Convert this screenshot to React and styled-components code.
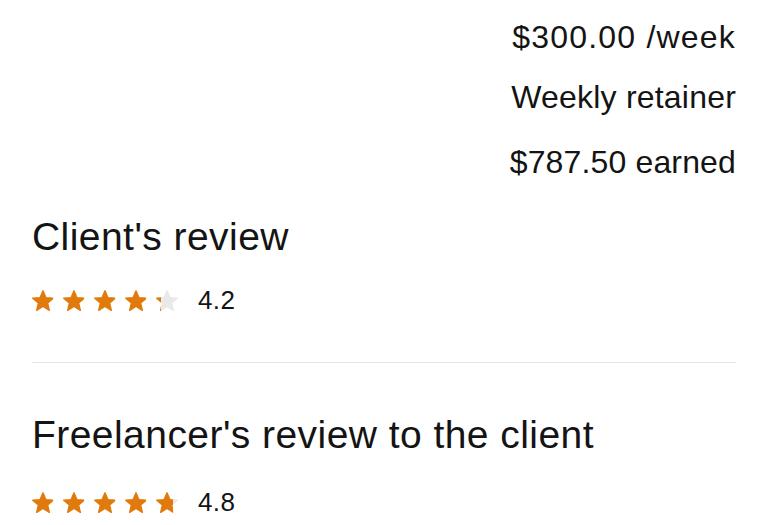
import React from "react";
import styled, { createGlobalStyle } from "styled-components";

const GlobalStyle = createGlobalStyle`
  html, body {
    margin: 0;
    padding: 0;
    background: #fff;
  }
  body {
    font-family: "Liberation Sans", Arial, sans-serif;
    color: #141414;
    -webkit-font-smoothing: antialiased;
  }
`;

const Page = styled.div`
  width: 768px;
  height: 525px;
  box-sizing: border-box;
  padding: 18px 32px 0 32px;
  overflow: hidden;
  display: flex;
  flex-direction: column;
`;

const Summary = styled.div`
  display: flex;
  flex-direction: column;
  align-items: flex-end;
`;

const SummaryLine = styled.div`
  font-size: 32px;
  line-height: 38px;
  margin-top: ${(p) => p.$top || 0}px;
  letter-spacing: ${(p) => p.$spacing || 0}px;
`;

const Section = styled.section`
  display: flex;
  flex-direction: column;
  margin-top: ${(p) => p.$top}px;
`;

const Heading = styled.h2`
  margin: 0;
  font-size: 39px;
  font-weight: 400;
  line-height: 46px;
  letter-spacing: 0.45px;
`;

const RatingRow = styled.div`
  display: flex;
  align-items: center;
  margin-top: ${(p) => p.$top}px;
`;

const Stars = styled.div`
  display: flex;
  gap: 9px;
`;

const Score = styled.span`
  margin-left: 20px;
  font-size: 26px;
  line-height: 22px;
  letter-spacing: 0.4px;
`;

const Divider = styled.hr`
  border: none;
  height: 1px;
  background: #e4e4e4;
  margin: 51px 0 0 0;
`;

const STAR =
  "M12 1.4L14.94 8.35L22.46 9L16.76 13.95L18.47 21.3L12 17.4L5.53 21.3L7.24 13.95L1.54 9L9.06 8.35Z";

function Star({ fill, id }) {
  const pct = Math.max(0, Math.min(1, fill)) * 100;
  return (
    <svg width="22" height="21" viewBox="0.8 0.6 22.4 21.4">
      <defs>
        <linearGradient id={id} x1="0" x2="1" y1="0" y2="0">
          <stop offset={`${pct}%`} stopColor="#e17a0c" />
          <stop offset={`${pct}%`} stopColor="#e9e9e9" />
        </linearGradient>
      </defs>
      <path
        d={STAR}
        fill={`url(#${id})`}
        stroke={`url(#${id})`}
        strokeWidth="1.4"
        strokeLinejoin="round"
      />
    </svg>
  );
}

function Rating({ value, name, top }) {
  return (
    <RatingRow $top={top}>
      <Stars>
        {[0, 1, 2, 3, 4].map((i) => (
          <Star key={i} id={`${name}-${i}`} fill={value - i} />
        ))}
      </Stars>
      <Score>{value.toFixed(1)}</Score>
    </RatingRow>
  );
}

export default function App() {
  return (
    <>
      <GlobalStyle />
      <Page>
        <Summary>
          <SummaryLine $spacing={1.2}>$300.00 /week</SummaryLine>
          <SummaryLine $top={22} $spacing={0.2}>Weekly retainer</SummaryLine>
          <SummaryLine $top={27} $spacing={0.15}>$787.50 earned</SummaryLine>
        </Summary>

        <Section $top={33}>
          <Heading>Client's review</Heading>
          <Rating value={4.2} name="client" top={29} />
        </Section>

        <Divider />

        <Section $top={49}>
          <Heading>Freelancer's review to the client</Heading>
          <Rating value={4.8} name="freelancer" top={33} />
        </Section>
      </Page>
    </>
  );
}
